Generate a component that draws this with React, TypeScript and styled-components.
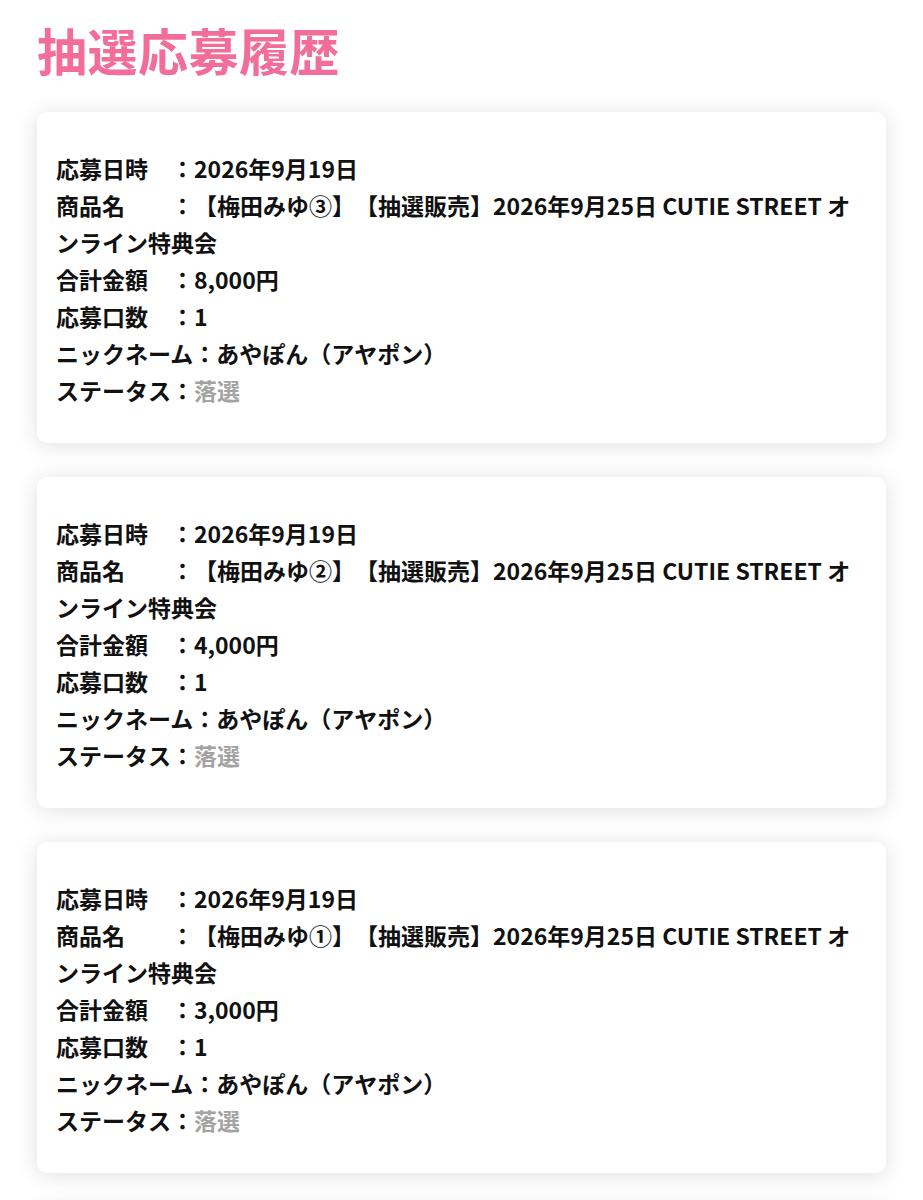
import styled, { createGlobalStyle } from 'styled-components'

const GlobalStyle = createGlobalStyle`
  body {
    margin: 0;
    background: #ffffff;
    font-family: 'Noto Sans CJK JP', 'Noto Sans', sans-serif;
    color: #111111;
  }
`

const Page = styled.div`
  padding: 0 37px 40px;
`

const Title = styled.h1`
  margin: 19px 0 33px;
  font-size: 50px;
  line-height: 60px;
  font-weight: 700;
  color: #f26d98;
  letter-spacing: 0.5px;
`

const List = styled.div`
  display: flex;
  flex-direction: column;
  gap: 34px;
`

const Card = styled.div`
  background: #ffffff;
  border-radius: 10px;
  box-shadow: 0 2px 22px rgba(0, 0, 0, 0.13);
  padding: 38px 18px 34px 19px;
`

const Line = styled.p`
  margin: 0;
  font-size: 23px;
  line-height: 37px;
  font-weight: 700;
  text-spacing-trim: space-all;
  font-feature-settings: normal;
`

const Status = styled.span`
  color: #a3a3a3;
`

interface IEntry {
  no: string
  price: string
}

const entries: IEntry[] = [
  { no: '③', price: '8,000' },
  { no: '②', price: '4,000' },
  { no: '①', price: '3,000' },
  { no: '①', price: '3,000' }
]

function EntryCard ({ entry }: { entry: IEntry }) {
  return (
    <Card>
      <Line>応募日時　：2026年9月19日</Line>
      <Line>
        商品名　　：【梅田みゆ{entry.no}】【抽選販売】2026年9月25日 CUTIE STREET
        オンライン特典会
      </Line>
      <Line>合計金額　：{entry.price}円</Line>
      <Line>応募口数　：1</Line>
      <Line>ニックネーム：あやぽん（アヤポン）</Line>
      <Line>
        ステータス：<Status>落選</Status>
      </Line>
    </Card>
  )
}

export default function App () {
  return (
    <>
      <GlobalStyle />
      <Page>
        <Title>抽選応募履歴</Title>
        <List>
          {entries.map((entry, idx) => (
            <EntryCard entry={entry} key={idx} />
          ))}
        </List>
      </Page>
    </>
  )
}
